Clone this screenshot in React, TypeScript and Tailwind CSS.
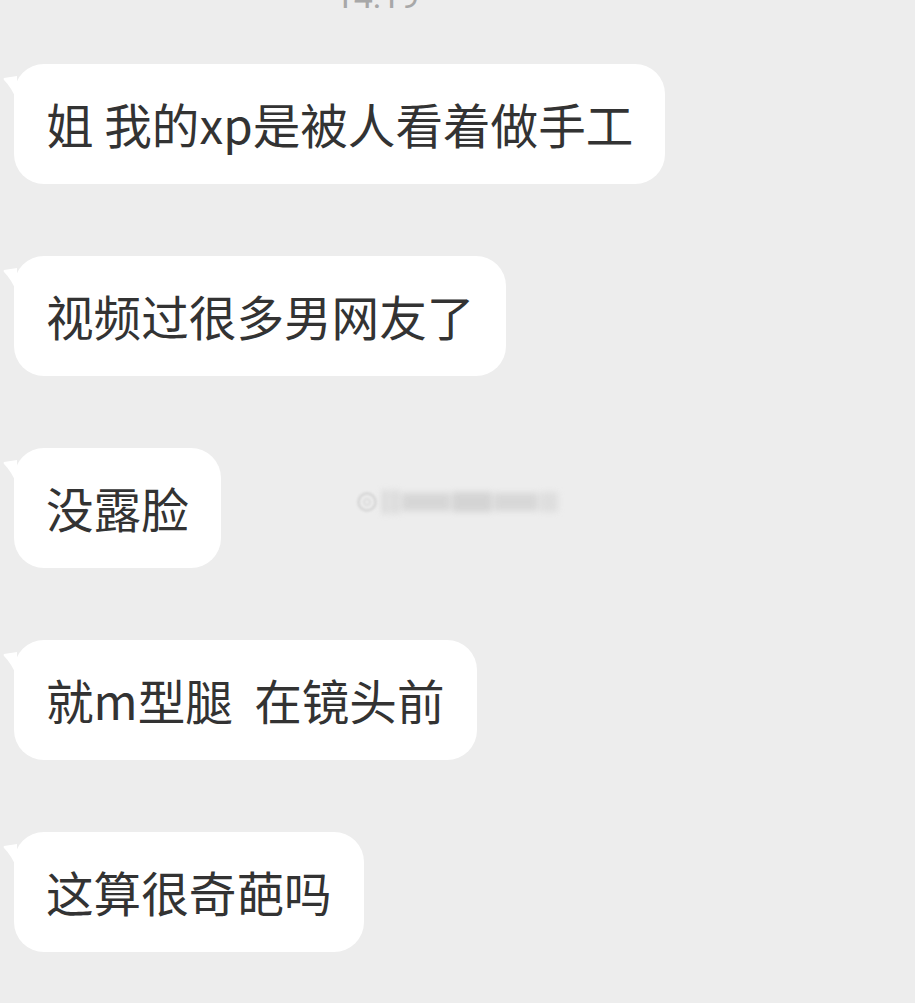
const messages = ["姐 我的xp是被人看着做手工", "视频过很多男网友了", "没露脸", "就m型腿  在镜头前", "这算很奇葩吗"];

function Tail() {
  return (
    <svg className="absolute left-[-11px] top-[12px]" width="14" height="26" viewBox="0 0 14 26">
      <path d="M14 0 L1 2 Q0 3 1 4 Q9 12 14 25 Z" fill="#ffffff" />
    </svg>
  );
}

function Bubble({ text }: { text: string }) {
  return (
    <div className="relative">
      <Tail />
      <div className="flex h-[120px] items-center whitespace-pre rounded-[30px] bg-white pl-[32px] pr-[32px] text-[47.6px] leading-none text-[#333333]">
        {text}
      </div>
    </div>
  );
}

function Watermark() {
  return (
    <div className="-mt-[12px] ml-[136px] flex items-center gap-[5px] opacity-70">
      <div className="relative h-[20px] w-[20px] rounded-full border-[3px] border-[#d0d0d0] blur-[0.8px]">
        <div className="absolute left-[3px] top-[3px] h-[8px] w-[8px] rounded-full border-2 border-[#d6d6d6]" />
      </div>
      <div className="flex items-center gap-[2px] blur-[3px]">
        <div className="h-[24px] w-[6px] bg-[#d0d0d0]" />
        <div className="h-[24px] w-[10px] bg-[#d6d6d6]" />
        <div className="h-[18px] w-[48px] bg-[#cdcdcd]" />
        <div className="h-[20px] w-[40px] bg-[#cacaca]" />
        <div className="h-[18px] w-[44px] bg-[#cfcfcf]" />
        <div className="h-[20px] w-[18px] bg-[#d8d8d8]" />
      </div>
    </div>
  );
}

export default function App() {
  return (
    <div className="h-[1003px] w-[915px] overflow-hidden bg-[#ededed] font-['Noto_Sans_CJK_SC',sans-serif]">
      <div className="-mt-[21px] h-[85px] w-[754px] text-center font-['Roboto',sans-serif] text-[34px] leading-[34px] text-[#a8a8a8]">
        14:19
      </div>
      <div className="flex flex-col items-start gap-[72px] pl-[14px]">
        {messages.map((m, i) => (
          <div key={i} className="flex items-center">
            <Bubble text={m} />
            {i === 2 ? <Watermark /> : null}
          </div>
        ))}
      </div>
    </div>
  );
}
